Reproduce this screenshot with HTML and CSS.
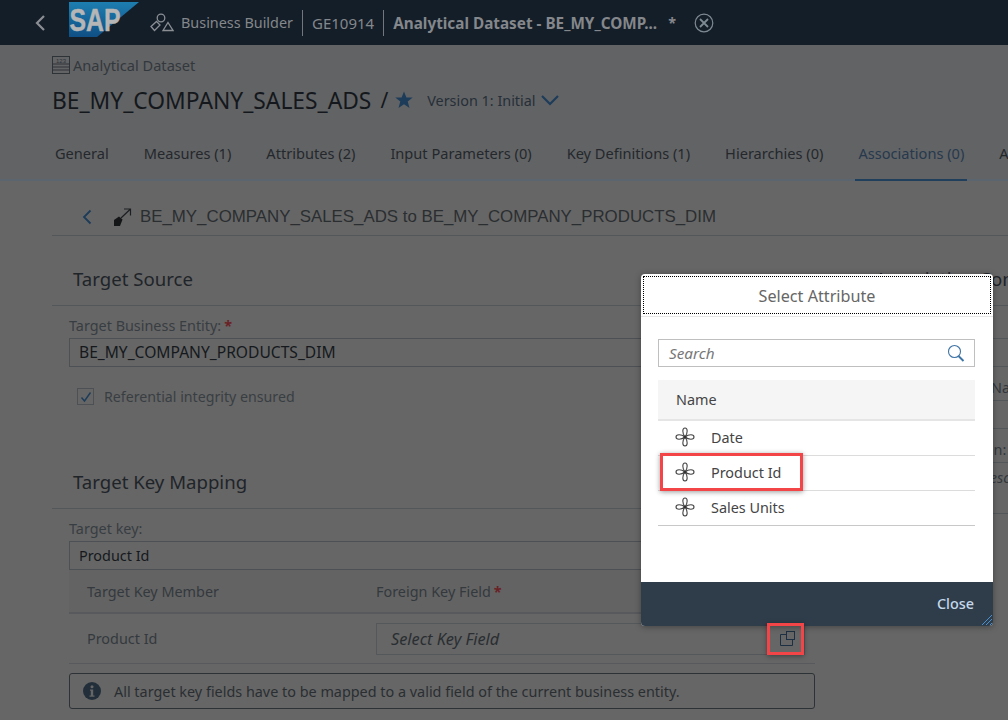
FILE: index.html

```html
<!DOCTYPE html>
<html lang="en">
<head>
  <meta charset="UTF-8">
  <meta name="viewport" content="width=device-width, initial-scale=1.0">
  <title>Analytical Dataset</title>
  <link rel="stylesheet" href="styles.css">
</head>
<body>
  <svg class="defs" width="0" height="0">
    <symbol id="flower" viewBox="0 0 20 20">
      <path d="M10 10C7 6 7.200 1 10 1s3 5 0 9C14 7 19 7.200 19 10s-5 3-9 0c3 4 2.800 9 0 9s-3-5 0-9C6 13 1 12.800 1 10s5-3 9 0z" fill="none" stroke="#444" stroke-width="1.100"/>
      <circle cx="10" cy="10" r="1.500" fill="#333"/>
    </symbol>
  </svg>

  <header class="shellbar">
    <svg class="shell-back" width="14" height="18" viewBox="0 0 14 18"><path d="M10 2L3 9l7 7" fill="none" stroke="#8b8f94" stroke-width="2.200"/></svg>
    <svg class="sap-logo" width="72" height="36" viewBox="0 0 72 36">
      <defs>
        <linearGradient id="sapBlue" x1="0" y1="0" x2="0" y2="1">
          <stop offset="0" stop-color="#1e7eb0"/>
          <stop offset="1" stop-color="#0f4f85"/>
        </linearGradient>
      </defs>
      <polygon points="0,0 70,0 28,35 0,35" fill="url(#sapBlue)"/>
      <text x="0.500" y="29" class="sap-text" textLength="51" lengthAdjust="spacingAndGlyphs">SAP</text>
    </svg>
    <svg class="shell-shapes" width="24" height="20" viewBox="0 0 24 20" fill="none" stroke="#8b8f94" stroke-width="1.300">
      <circle cx="11" cy="5" r="3.800"/>
      <path d="M1 13.500L6.500 8.500 10 12 4.500 17.500z"/>
      <path d="M18 9.500l5 8h-10z"/>
    </svg>
    <span class="shell-item">Business Builder</span>
    <span class="shell-sep"></span>
    <span class="shell-item shell-id">GE10914</span>
    <span class="shell-sep"></span>
    <span class="shell-item shell-bold">Analytical Dataset - BE_MY_COMP...</span>
    <span class="shell-star">*</span>
    <svg class="shell-close" width="20" height="20" viewBox="0 0 20 20" fill="none" stroke="#7d8993">
      <circle cx="10" cy="10" r="8.800" stroke-width="1.200"/>
      <path d="M6 6l8 8M14 6l-8 8" stroke-width="1.800"/>
    </svg>
  </header>

  <section class="object-head">
    <div class="object-type">
      <svg width="18" height="18" viewBox="0 0 18 18" fill="none" stroke="#2e3338">
        <rect x="0.500" y="0.500" width="17" height="17"/>
        <path d="M0 8h18M0 11h18M0 14h18"/>
        <text x="9" y="6.500" class="tiny-num">123</text>
      </svg>
      <span>Analytical Dataset</span>
    </div>
    <div class="object-title">
      <h1>BE_MY_COMPANY_SALES_ADS</h1>
      <span class="slash">/</span>
      <svg width="18" height="18" viewBox="0 0 18 18"><path d="M9 0.500l2.400 6h6.300l-5 4 1.800 6.500L9 13.300 3.500 17l1.800-6.500-5-4h6.300z" fill="#1d3c5a"/></svg>
      <span class="version">Version 1: Initial</span>
      <svg width="18" height="12" viewBox="0 0 18 12"><path d="M1 2l8 8 8-8" fill="none" stroke="#1d3c5a" stroke-width="2.200"/></svg>
    </div>
    <nav class="tabs">
      <span class="tab">General</span>
      <span class="tab">Measures (1)</span>
      <span class="tab">Attributes (2)</span>
      <span class="tab">Input Parameters (0)</span>
      <span class="tab">Key Definitions (1)</span>
      <span class="tab">Hierarchies (0)</span>
      <span class="tab tab-active">Associations (0)</span>
      <span class="tab">Auxiliary</span>
    </nav>
  </section>

  <main class="content">
    <div class="detail-head">
      <svg width="12" height="16" viewBox="0 0 12 16"><path d="M9.500 1.500L3 8l6.500 6.500" fill="none" stroke="#1d3c5a" stroke-width="1.800"/></svg>
      <svg class="assoc-icon" width="19" height="19" viewBox="0 0 19 19">
        <path d="M1 12l5-3.500 3.500 3L7 18H1z" fill="#141618"/>
        <path d="M8 10L17.500 1M11 1h6.500v6.500" fill="none" stroke="#1c1f22" stroke-width="1.200"/>
      </svg>
      <span class="detail-title">BE_MY_COMPANY_SALES_ADS to BE_MY_COMPANY_PRODUCTS_DIM</span>
    </div>

    <div class="columns">
      <div class="left-col">
        <h2 class="section-title">Target Source</h2>
        <div class="form-block">
          <label class="field-label">Target Business Entity:<span class="req">*</span></label>
          <div class="field-input field-entity">BE_MY_COMPANY_PRODUCTS_DIM</div>
          <div class="check-row">
            <span class="checkbox"><svg width="12" height="12" viewBox="0 0 12 12"><path d="M1.500 6.500L4.500 10 10.500 1.500" fill="none" stroke="#1d3c5a" stroke-width="1.400"/></svg></span>
            <span>Referential integrity ensured</span>
          </div>
        </div>

        <h2 class="section-title">Target Key Mapping</h2>
        <div class="form-block">
          <label class="field-label">Target key:</label>
          <div class="field-input">Product Id</div>
          <div class="key-table">
            <div class="key-head">
              <span class="key-col">Target Key Member</span>
              <span>Foreign Key Field<span class="req">*</span></span>
            </div>
            <div class="key-row">
              <span class="key-col">Product Id</span>
              <div class="key-input">
                <em>Select Key Field</em>
                <svg width="15" height="15" viewBox="0 0 15 15" fill="none" stroke="#1d2f42" stroke-width="1">
                  <path d="M6.500 3.500H.5v11h12V8.500"/>
                  <rect x="6.500" y="0.500" width="8" height="8"/>
                </svg>
              </div>
            </div>
          </div>
          <div class="key-note">
            <svg width="18" height="18" viewBox="0 0 18 18"><circle cx="9" cy="9" r="9" fill="#222f3b"/><circle cx="9" cy="4.800" r="1.500" fill="#666"/><path d="M7 7.500h3.200v6h1.300v1.300h-5v-1.300h1.300V8.800H7z" fill="#666"/></svg>
            <span>All target key fields have to be mapped to a valid field of the current business entity.</span>
          </div>
        </div>
      </div>

      <div class="right-col">
        <h2 class="section-title right-title">Association Configuration</h2>
        <div class="right-field right-first"></div>
        <div class="right-field"></div>
        <div class="right-label">Technical Name</div>
        <div class="right-field right-boxed"></div>
        <div class="right-label">Description:</div>
        <div class="right-area">Enter Description</div>
      </div>
    </div>
  </main>

  <div class="dialog">
    <div class="dialog-head"><span>Select Attribute</span></div>
    <div class="dialog-body">
      <div class="search">
        <em>Search</em>
        <svg width="18" height="18" viewBox="0 0 18 18" fill="none"><circle cx="7.500" cy="7.500" r="6" stroke="#3f74a6" stroke-width="1.100"/><path d="M11.500 12l5 5" stroke="#3f74a6" stroke-width="2"/></svg>
      </div>
      <div class="attr-head">Name</div>
      <div class="attr-row"><svg width="20" height="20"><use href="#flower"/></svg><span>Date</span></div>
      <div class="attr-row"><svg width="20" height="20"><use href="#flower"/></svg><span>Product Id</span></div>
      <div class="attr-row"><svg width="20" height="20"><use href="#flower"/></svg><span>Sales Units</span></div>
    </div>
    <div class="dialog-foot">
      <span>Close</span>
      <svg class="resize" width="10" height="10" viewBox="0 0 10 10"><path d="M0 10L10 0M4 10l6-6M8 10l2-2" stroke="#4a8fd0" stroke-width="1"/></svg>
    </div>
    <span class="callout callout-row"></span>
  </div>

  <span class="callout callout-icon"></span>
</body>
</html>
```

FILE: styles.css

```css
/* General */
html, body {
  margin: 0;
  height: 720px;
  overflow: hidden;
}

body {
  position: relative;
  background-color: #666666;
  font-family: "Noto Sans", Arial, sans-serif;
  font-size: 14.4px;
  color: #33383d;
}

.defs {
  position: absolute;
}

/* Shell bar */
.shellbar {
  display: flex;
  align-items: center;
  height: 45px;
  padding-left: 34px;
  background-color: #141e29;
  color: #84878b;
  font-size: 14.4px;
}

.shell-back {
  margin-right: 21px;
}

.sap-logo {
  margin: -5px 9px 0 0;
}

.sap-text {
  font-family: "Liberation Sans", Arial, sans-serif;
  font-weight: 700;
  font-size: 32px;
  fill: #b6b6b6;
  stroke: #b6b6b6;
  stroke-width: 0.5px;
}

.shell-shapes {
  margin-right: 7px;
}

.shell-sep {
  width: 1px;
  height: 26px;
  margin: 0 9px;
  background-color: #73777b;
}

.shell-id {
  font-size: 15px;
}

.shell-bold {
  font-size: 15.300px;
  font-weight: 700;
}

.shell-star {
  margin: 0 18px 0 11px;
  font-weight: 700;
}

/* Object header */
.object-head {
  height: 134px;
  padding-left: 52px;
  border-bottom: 2px solid #5a6570;
  background-color: #626365;
}

.object-type {
  display: flex;
  align-items: center;
  gap: 3px;
  height: 18px;
  padding-top: 11px;
  font-size: 14.600px;
}

.tiny-num {
  font-family: "Liberation Sans", Arial, sans-serif;
  font-size: 6px;
  fill: #2e3338;
  stroke: none;
  text-anchor: middle;
}

.object-title {
  display: flex;
  align-items: center;
  height: 30px;
  margin-top: 11px;
}

.object-title h1 {
  margin: 0;
  font-size: 22.800px;
  font-weight: 400;
  color: #14181c;
}

.slash {
  margin: 0 7px 0 9px;
  font-size: 21px;
  color: #14181c;
}

.version {
  margin: 0 5px 0 14px;
  color: #262f38;
}

.tabs {
  display: flex;
  gap: 35px;
  height: 49px;
  margin-top: 16px;
  padding-left: 3px;
  font-size: 14.600px;
  white-space: nowrap;
}

.tab {
  position: relative;
  padding-top: 12px;
  color: #24282c;
}

.tab-active {
  color: #26394d;
}

.tab-active::after {
  content: "";
  position: absolute;
  left: -3px;
  right: -3px;
  bottom: -1px;
  height: 2px;
  background-color: #1f3f5c;
}

/* Association detail */
.content {
  padding-left: 52px;
}

.detail-head {
  display: flex;
  align-items: center;
  width: 956px;
  height: 55px;
  padding: 18px 0 0 29px;
  box-sizing: border-box;
  border-bottom: 1px solid #54575a;
}

.assoc-icon {
  margin: 0 8px 0 20px;
}

.detail-title {
  font-family: "Liberation Sans", Arial, sans-serif;
  font-size: 16.850px;
  color: #2b2e31;
}

.columns {
  display: flex;
}

.left-col {
  flex: none;
  width: 763px;
}

.section-title {
  height: 70px;
  margin: 0;
  padding: 31px 0 0 21px;
  box-sizing: border-box;
  border-bottom: 1px solid #54575a;
  font-size: 18.600px;
  font-weight: 400;
  line-height: 24px;
  color: #1f2429;
}

.form-block {
  padding-left: 17px;
}

.field-label {
  display: block;
  height: 22px;
  padding-top: 10px;
  line-height: 20px;
  color: #383d42;
}

.req {
  margin-left: 3px;
  font-weight: 700;
  color: #6a2125;
}

.field-input {
  height: 29px;
  padding-left: 9px;
  box-sizing: border-box;
  border: 1px solid #4d5155;
  line-height: 27px;
  color: #15191d;
}

.field-entity {
  font-size: 15.600px;
}

.check-row {
  display: flex;
  align-items: center;
  gap: 10px;
  margin-top: 20px;
  margin-bottom: 33px;
  padding-left: 8px;
  font-size: 14.200px;
  color: #393e43;
}

.checkbox {
  display: flex;
  align-items: center;
  justify-content: center;
  width: 15px;
  height: 15px;
  border: 1px solid #4d5155;
}

.key-table {
  width: 746px;
}

.key-head, .key-row {
  display: flex;
  align-items: center;
  box-sizing: border-box;
  border-bottom: 1px solid #57595c;
}

.key-head {
  height: 44px;
  border-bottom-width: 2px;
  background-color: #636363;
  color: #34393e;
}

.key-row {
  height: 50px;
  color: #34393e;
}

.key-col {
  flex: none;
  width: 307px;
  padding-left: 18px;
  box-sizing: border-box;
}

.key-input {
  display: flex;
  align-items: center;
  justify-content: space-between;
  width: 429px;
  height: 32px;
  padding: 0 9px 0 14px;
  box-sizing: border-box;
  border: 1px solid #55585b;
}

.key-input em {
  font-size: 16.300px;
  color: #2a2e32;
}

.key-note {
  display: flex;
  align-items: center;
  gap: 13px;
  width: 746px;
  height: 36px;
  margin-top: 9px;
  padding-left: 13px;
  box-sizing: border-box;
  border: 1px solid #2d3237;
  border-radius: 3px;
  color: #2a2e32;
}

/* Right column, mostly behind the dialog */
.right-col {
  flex: 1;
  min-width: 0;
  white-space: nowrap;
}

.right-title {
  padding-left: 60px;
}

.right-field {
  height: 27px;
  border-bottom: 1px solid #54575a;
}

.right-first {
  height: 32px;
}

.right-boxed {
  border-top: 1px solid #54575a;
}

.right-label {
  height: 33px;
  padding-left: 110px;
  line-height: 42px;
  color: #33383d;
}

.right-area {
  height: 50px;
  padding-left: 128px;
  border-top: 1px solid #54575a;
  border-bottom: 1px solid #54575a;
  font-style: italic;
  line-height: 30px;
}

/* Dialog */
.dialog {
  position: absolute;
  left: 641px;
  top: 274px;
  display: flex;
  flex-direction: column;
  width: 352px;
  height: 352px;
  border-radius: 4px;
  background-color: #fff;
  box-shadow: 0 1px 6px rgba(0, 0, 0, 0.35);
}

.dialog-head {
  height: 43px;
  padding: 2px 2px 0;
  box-sizing: border-box;
  border-bottom: 1px solid #e6e6e6;
}

.dialog-head span {
  display: block;
  height: 38px;
  box-sizing: border-box;
  border: 1px dotted #000;
  font-size: 16.200px;
  line-height: 38px;
  text-align: center;
  color: #666;
}

.dialog-body {
  flex: 1;
  padding: 22px 18px 0 17px;
}

.search {
  display: flex;
  align-items: center;
  justify-content: space-between;
  height: 28px;
  padding: 0 9px 1px 10px;
  box-sizing: border-box;
  border: 1px solid #bfbfbf;
  font-size: 15.300px;
  color: #777;
}

.attr-head {
  height: 41px;
  margin-top: 13px;
  padding-left: 18px;
  box-sizing: border-box;
  border-bottom: 2px solid #e5e5e5;
  background-color: #f5f5f5;
  line-height: 39px;
  color: #444;
}

.attr-row {
  display: flex;
  align-items: center;
  gap: 16px;
  height: 35px;
  padding: 0 0 2px 17px;
  box-sizing: border-box;
  border-bottom: 1px solid #dcdcdc;
  color: #444;
}

.attr-row:last-child {
  border-bottom-color: #c8c8c8;
}

.dialog-foot {
  position: relative;
  height: 44px;
  padding-right: 19px;
  border-radius: 0 0 4px 4px;
  background-color: #2f3c4a;
  line-height: 44px;
  text-align: right;
  font-weight: 500;
  color: #c4d8ea;
}

.resize {
  position: absolute;
  right: 1px;
  bottom: 1px;
}

/* Red highlight boxes */
.callout {
  position: absolute;
  box-sizing: border-box;
  border: 3px solid #f34448;
  box-shadow: 0 1px 5px rgba(0, 0, 0, 0.4);
}

.callout-icon {
  left: 767px;
  top: 623px;
  width: 37px;
  height: 32px;
}

.callout-row {
  left: 19px;
  top: 179px;
  width: 143px;
  height: 38px;
}
```
